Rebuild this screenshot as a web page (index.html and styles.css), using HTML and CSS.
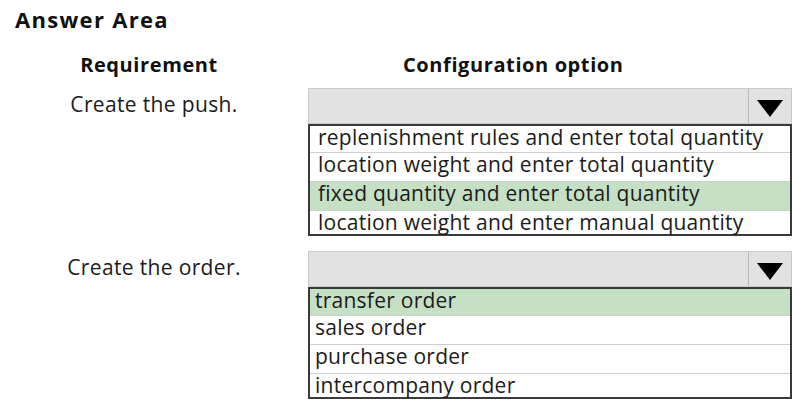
FILE: index.html
```html
<!DOCTYPE html>
<html lang="en">
<head>
    <meta charset="UTF-8">
    <title>Answer Area</title>
    <link rel="stylesheet" href="styles.css">
</head>
<body>
    <h1 class="title">Answer Area</h1>

    <div class="head-row">
        <div class="head-req">Requirement</div>
        <div class="head-opt">Configuration option</div>
    </div>

    <div class="question">
        <div class="req">Create the push.</div>
        <div class="dropdown">
            <div class="select">
                <span class="select-field"></span>
                <span class="select-btn">
                    <svg width="26" height="17" viewBox="0 0 26 17"><polygon points="0,0 26,0 13,17" fill="#000"/></svg>
                </span>
            </div>
            <ul class="options wide">
                <li>replenishment rules and enter total quantity</li>
                <li>location weight and enter total quantity</li>
                <li class="picked">fixed quantity and enter total quantity</li>
                <li>location weight and enter manual quantity</li>
            </ul>
        </div>
    </div>

    <div class="question">
        <div class="req">Create the order.</div>
        <div class="dropdown">
            <div class="select">
                <span class="select-field"></span>
                <span class="select-btn">
                    <svg width="26" height="17" viewBox="0 0 26 17"><polygon points="0,0 26,0 13,17" fill="#000"/></svg>
                </span>
            </div>
            <ul class="options">
                <li class="picked">transfer order</li>
                <li>sales order</li>
                <li>purchase order</li>
                <li>intercompany order</li>
            </ul>
        </div>
    </div>
</body>
</html>
```

FILE: styles.css
```css
body {
    margin: 0;
    background: #fff;
    color: #1b1b1b;
    font-family: "Open Sans", "Noto Sans", sans-serif;
}

.title {
    margin: 0;
    padding: 4px 0 0 15px;
    font-size: 22px;
    line-height: 30px;
    font-weight: bold;
    color: #111;
    letter-spacing: 1.3px;
}

.head-row {
    display: grid;
    grid-template-columns: 308px 484px;
    margin-top: 18px;
    font-size: 20px;
    line-height: 26px;
    font-weight: bold;
    color: #111;
    letter-spacing: 0.6px;
}

.head-req {
    text-align: center;
    padding-right: 10px;
}

.head-opt {
    padding-left: 95px;
}

.question {
    display: grid;
    grid-template-columns: 308px 484px;
    margin-top: 10px;
}

.question + .question {
    margin-top: 15px;
}

.req {
    text-align: center;
    font-size: 21px;
    line-height: 30px;
    letter-spacing: 0.35px;
    padding-top: 1px;
}

.select {
    display: flex;
    height: 34px;
    border: 1px solid #c9c9c9;
    background: #e2e2e2;
}

.select-field {
    flex: 1;
}

.select-btn {
    width: 43px;
    border-left: 1px solid #b9b9b9;
    display: flex;
    justify-content: center;
    padding-top: 11px;
    box-sizing: border-box;
}

.options {
    list-style: none;
    margin: 0;
    padding: 0;
    border: 2px solid #3a3a3a;
    font-size: 21px;
    letter-spacing: 0.25px;
}

.options li {
    box-sizing: border-box;
    height: 29px;
    line-height: 22px;
    padding-left: 5px;
    border-top: 1px solid #cfcfcf;
    white-space: nowrap;
}

.options li:first-child {
    border-top: none;
    height: 26px;
}

.options li:last-child {
    height: 24px;
}

.options.wide li {
    padding-left: 8px;
}

.options li.picked {
    background: #c6e0c5;
}
```
